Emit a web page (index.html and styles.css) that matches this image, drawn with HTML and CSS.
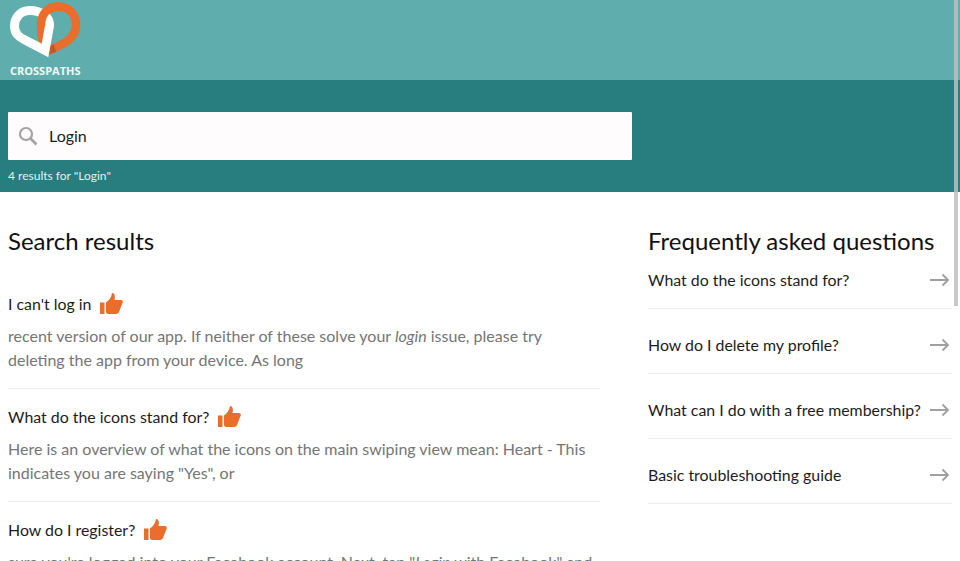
FILE: index.html
```html
<!DOCTYPE html>
<html lang="en">
<head>
  <meta charset="UTF-8">
  <meta name="viewport" content="width=device-width, initial-scale=1.0">
  <title>Search results</title>
  <link rel="stylesheet" href="styles.css">
</head>
<body>
  <header class="brand">
    <svg class="logo" viewBox="8 0 80 62" width="80" height="62">
      <path d="M44.500 44C39 32 39 7 58 6.500C70 6.500 76 15 76 25C76 38 65 44 47 51" fill="none" stroke="#ea6d2c" stroke-width="8.500"/>
      <path d="M47 51L55 48" fill="none" stroke="#c05a26" stroke-width="8"/>
      <path d="M45 50.500L49.500 26C50 16 40 10.500 30 10.500C20 10.500 14.500 18 14.500 26C14.500 34 19 37 25 40Z" fill="none" stroke="#fff" stroke-width="9"/>
      <path d="M41 25C41 14 48 6.500 58 6.500" fill="none" stroke="#ea6d2c" stroke-width="8.500"/>
    </svg>
    <span class="brand-name">CROSSPATHS</span>
  </header>

  <!-- Search band -->
  <section class="search">
    <div class="search-box">
      <svg class="search-icon" viewBox="0 0 20 20" width="20" height="20">
        <circle cx="8" cy="8" r="6" fill="none" stroke="#a3a3a3" stroke-width="2.200"/>
        <path d="M12.500 12.500L18.500 18.500" stroke="#a3a3a3" stroke-width="2.600"/>
      </svg>
      <span class="search-text">Login</span>
    </div>
    <p class="count">4 results for "Login"</p>
  </section>

  <main class="content">
    <section class="results">
      <h2>Search results</h2>

      <article class="result">
        <h3>I can't log in <svg class="thumb" viewBox="0 0 24 24" width="24" height="24"><use href="#thumb"/></svg></h3>
        <p>recent version of our app. If neither of these solve your <em>login</em> issue, please try deleting the app from your device. As long</p>
      </article>

      <article class="result">
        <h3>What do the icons stand for? <svg class="thumb" viewBox="0 0 24 24" width="24" height="24"><use href="#thumb"/></svg></h3>
        <p>Here is an overview of what the icons on the main swiping view mean: Heart - This indicates you are saying "Yes", or</p>
      </article>

      <article class="result">
        <h3>How do I register? <svg class="thumb" viewBox="0 0 24 24" width="24" height="24"><use href="#thumb"/></svg></h3>
        <p>sure you're logged into your Facebook account. Next, tap "<em>Login</em> with Facebook" and</p>
      </article>
    </section>

    <aside class="faq">
      <h2>Frequently asked questions</h2>
      <a class="faq-row" href="#">What do the icons stand for? <svg class="arrow" viewBox="0 0 20 14" width="20" height="14"><use href="#arrow"/></svg></a>
      <a class="faq-row" href="#">How do I delete my profile? <svg class="arrow" viewBox="0 0 20 14" width="20" height="14"><use href="#arrow"/></svg></a>
      <a class="faq-row" href="#">What can I do with a free membership? <svg class="arrow" viewBox="0 0 20 14" width="20" height="14"><use href="#arrow"/></svg></a>
      <a class="faq-row" href="#">Basic troubleshooting guide <svg class="arrow" viewBox="0 0 20 14" width="20" height="14"><use href="#arrow"/></svg></a>
    </aside>
  </main>

  <div class="scroll-thumb"></div>

  <svg class="defs" width="0" height="0">
    <symbol id="thumb" viewBox="0 0 24 24">
      <path fill="#ea6d2c" d="M1 10.500h4.500V22H1zM7 10.500C10 8.500 12.500 5 13 1c2.500 0 3.500 2.500 2.500 7H22c1.800 0 2.300 2 1.300 3.500L20 20c-.8 1.500-2 2-3.500 2H10c-1.500 0-2-.5-3-1.500z"/>
    </symbol>
    <symbol id="arrow" viewBox="0 0 20 14">
      <path fill="none" stroke="#a0a0a0" stroke-width="1.800" d="M0 7H18M12.500 1.500L18 7L12.500 12.500"/>
    </symbol>
  </svg>
</body>
</html>
```

FILE: styles.css
```css
html,
body {
  height: 100%;
  overflow: hidden;
}

body {
  margin: 0;
  font-family: Lato, "Open Sans", sans-serif;
  color: #1c1c1c;
  background: #fff;
}

/* Logo band */
.brand {
  height: 80px;
  background: #5fadac;
  padding-left: 8px;
  display: flex;
  flex-direction: column;
}

.logo {
  display: block;
}

.brand-name {
  font-family: "Open Sans", sans-serif;
  font-size: 11px;
  font-weight: 700;
  color: #f2f8f8;
  margin: 2px 0 0 2px;
  line-height: 14px;
}

/* Search band */
.search {
  height: 112px;
  box-sizing: border-box;
  background: #287d7e;
  padding: 32px 8px 0;
}

.search-box {
  width: 624px;
  height: 48px;
  box-sizing: border-box;
  background: #fffcfd;
  border-radius: 1px;
  padding-left: 10px;
  display: flex;
  align-items: center;
  gap: 11px;
  font-size: 16px;
}

.search-icon {
  flex: none;
}

.search-text {
  padding-bottom: 2px;
}

.count {
  margin: 8px 0 0;
  font-size: 12px;
  line-height: 16px;
  color: #e4f0f0;
}

/* Main columns */
.content {
  display: flex;
  padding: 0 8px;
}

.results {
  width: 592px;
  margin-right: 48px;
}

.faq {
  width: 304px;
}

h2 {
  font-size: 24px;
  font-weight: 400;
  line-height: 32px;
  margin: 33px 0 1px;
  color: #111;
}

.results h2 {
  margin-bottom: 19px;
}

.result {
  padding: 16px 0;
  border-bottom: 1px solid #ececec;
}

.result h3 {
  margin: 0;
  font-size: 15.900px;
  font-weight: 400;
  line-height: 24px;
  display: flex;
  align-items: center;
  gap: 8px;
}

.thumb {
  flex: none;
}

.result p {
  margin: 8px 0 0;
  font-size: 16px;
  line-height: 24px;
  color: #757575;
}

/* FAQ list */
.faq-row {
  height: 65px;
  box-sizing: border-box;
  padding-top: 6px;
  border-bottom: 1px solid #ececec;
  display: flex;
  align-items: center;
  justify-content: space-between;
  font-size: 15.900px;
  color: #1c1c1c;
  text-decoration: none;
}

.faq h2 + .faq-row {
  height: 51px;
  padding: 0 0 8px;
}

.arrow {
  flex: none;
  margin: 2px 2px 0 0;
}

.scroll-thumb {
  position: absolute;
  top: 0;
  right: 2px;
  width: 4px;
  height: 306px;
  background: rgba(190, 190, 190, 0.85);
}

.defs {
  position: absolute;
}
```
